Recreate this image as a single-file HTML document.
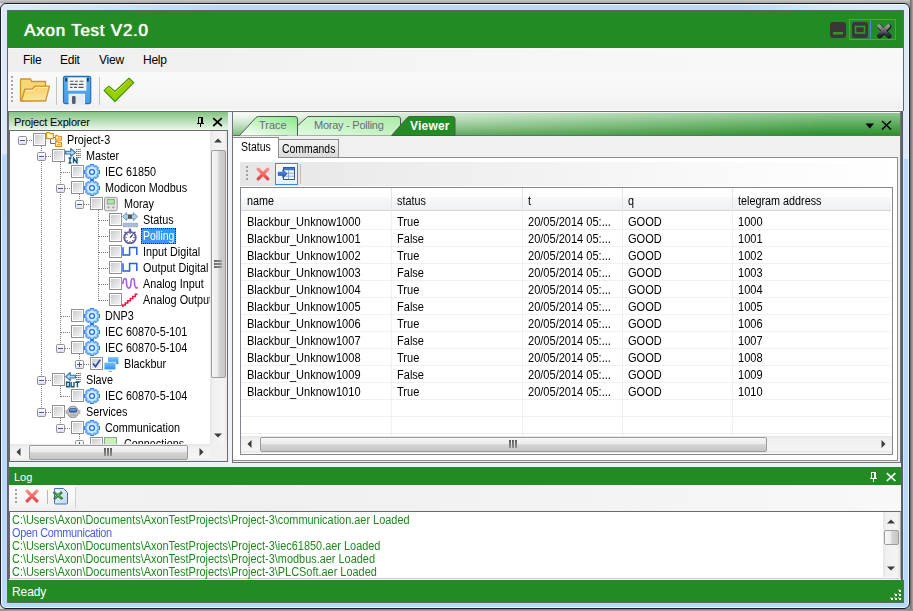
<!DOCTYPE html>
<html><head><meta charset="utf-8"><style>
html,body{margin:0;padding:0;}
body{width:913px;height:611px;position:relative;overflow:hidden;background:linear-gradient(90deg,#d8d8d8,#e4e4e4 50%,#d0d0d0 98%,#8a8a8a);font-family:'Liberation Sans',sans-serif;}
div{position:absolute;}
svg{position:absolute;}
</style></head><body>
<div style="left:0px;top:0px;width:913px;height:3px;background:linear-gradient(#c8c8c8,#a4a4a4);"></div>
<div style="left:910px;top:0px;width:3px;height:611px;background:linear-gradient(90deg,#6a6a6a,#8c8c8c 60%,#a8a8a8);"></div>
<div style="left:0px;top:609px;width:913px;height:2px;background:linear-gradient(#7c7c7c,#a8a8a8);"></div>
<div style="left:0px;top:3px;width:910px;height:606px;box-sizing:border-box;border:1px solid #1b1f2a;border-radius:6px;background:linear-gradient(90deg,#dde9f8 0,#d4e6f8 80px,#b9d9f8 220px,#b9d9f8 740px,#d6e7f8 820px,#dde9f8 100%) top/100% 7px no-repeat,linear-gradient(180.3deg,#dfeaf8 0,#dde9f8 154.5px,#b9d8f8 155.5px,#bad9f9);box-shadow:inset 0 0 0 1px #f2f8ff;"></div>
<div style="left:7px;top:10px;width:897px;height:593px;box-sizing:border-box;border:1px solid #5f6670;background:#eef3f9;"></div>
<div style="left:8px;top:11px;width:895px;height:37px;background:#238b23;"></div>
<div style="left:24px;top:21px;font:17px/20px 'Liberation Sans',sans-serif;color:#fff;letter-spacing:0.75px;text-shadow:0.5px 0 0 #fff,0 0 2px rgba(255,255,220,.4);">Axon Test V2.0</div>
<div style="left:8px;top:48px;width:895px;height:24px;background:linear-gradient(90deg,#efefef 0,#f0f0f0 160px,#f5f5f5 420px,#f7f7f7 600px,#f8f8f8);border-top:1px solid #fafafa;box-sizing:border-box;"></div>
<div style="left:23px;top:53px;font:12px/14px 'Liberation Sans',sans-serif;color:#000;letter-spacing:-0.25px;">File</div>
<div style="left:60px;top:53px;font:12px/14px 'Liberation Sans',sans-serif;color:#000;letter-spacing:-0.25px;">Edit</div>
<div style="left:99px;top:53px;font:12px/14px 'Liberation Sans',sans-serif;color:#000;letter-spacing:-0.25px;">View</div>
<div style="left:143px;top:53px;font:12px/14px 'Liberation Sans',sans-serif;color:#000;letter-spacing:-0.25px;">Help</div>
<div style="left:8px;top:72px;width:895px;height:40px;background:linear-gradient(#fafafa,#f5f5f5 70%,#f0f0f0 95%,#ffffff 97.5%);border-bottom:1px solid #6e6e6e;box-sizing:border-box;"></div>
<div style="left:8px;top:112px;width:220px;height:350px;background:#fff;"></div>
<div style="left:8px;top:112px;width:220px;height:18px;box-sizing:border-box;border-left:1px solid #6a6a6a;background:linear-gradient(#84c584,#ecf7ec);"></div>
<div style="left:14px;top:116px;font:11px/12px 'Liberation Sans',sans-serif;color:#000;letter-spacing:-0.15px;">Project Explorer</div>
<div style="left:8px;top:130px;width:220px;height:332px;box-sizing:border-box;border:1px solid #6a6a6a;border-left-width:2px;background:#fff;"></div>
<svg width="0" height="0" style="position:absolute"><defs>
<radialGradient id="gearg" cx="50%" cy="50%" r="50%"><stop offset="0" stop-color="#f4faff"/><stop offset="0.5" stop-color="#c4e2ff"/><stop offset="0.8" stop-color="#9ccdfa"/><stop offset="1" stop-color="#6ab0f4"/></radialGradient>
<linearGradient id="cbg" x1="0" y1="0" x2="1" y2="1"><stop offset="0" stop-color="#c9cbd0"/><stop offset="1" stop-color="#f6f6f6"/></linearGradient>
<linearGradient id="expg" x1="0" y1="0" x2="0" y2="1"><stop offset="0" stop-color="#ffffff"/><stop offset="0.5" stop-color="#f4f4f4"/><stop offset="1" stop-color="#dcdcdc"/></linearGradient>
</defs></svg>
<div style="left:10px;top:131px;width:200px;height:313px;overflow:hidden;"><div style="left:31px;top:15px;width:1px;height:267px;background:repeating-linear-gradient(180deg,#7a7a7a 0 1px,transparent 1px 2px);"></div>
<div style="left:50px;top:31px;width:1px;height:187px;background:repeating-linear-gradient(180deg,#7a7a7a 0 1px,transparent 1px 2px);"></div>
<div style="left:69px;top:63px;width:1px;height:11px;background:repeating-linear-gradient(180deg,#7a7a7a 0 1px,transparent 1px 2px);"></div>
<div style="left:88px;top:79px;width:1px;height:91px;background:repeating-linear-gradient(180deg,#7a7a7a 0 1px,transparent 1px 2px);"></div>
<div style="left:69px;top:223px;width:1px;height:11px;background:repeating-linear-gradient(180deg,#7a7a7a 0 1px,transparent 1px 2px);"></div>
<div style="left:50px;top:255px;width:1px;height:11px;background:repeating-linear-gradient(180deg,#7a7a7a 0 1px,transparent 1px 2px);"></div>
<div style="left:50px;top:287px;width:1px;height:11px;background:repeating-linear-gradient(180deg,#7a7a7a 0 1px,transparent 1px 2px);"></div>
<div style="left:69px;top:303px;width:1px;height:11px;background:repeating-linear-gradient(180deg,#7a7a7a 0 1px,transparent 1px 2px);"></div>
<svg style="left:8px;top:5px" width="9" height="9" viewBox="0 0 9 9"><rect x="0.5" y="0.5" width="8" height="8" rx="1" fill="url(#expg)" stroke="#919191"/><rect x="2" y="4" width="5" height="1" fill="#3b55b0"/></svg>
<div style="left:17px;top:9px;width:6px;height:1px;background:repeating-linear-gradient(90deg,#7a7a7a 0 1px,transparent 1px 2px);"></div>
<svg style="left:23px;top:2px" width="13" height="13" viewBox="0 0 13 13"><rect x="0.5" y="0.5" width="12" height="12" fill="#fff" stroke="#8e8f8f"/><rect x="2" y="2" width="9" height="9" fill="url(#cbg)"/></svg>
<svg style="left:36px;top:1px" width="16" height="16" viewBox="0 0 16 16"><path d="M4.5,6.5 V11.5 H9.5 M7.5,5.5 H9.5" stroke="#707070" fill="none"/><path d="M0.6,6.6 V0.6 H3.4 L4.4,1.6 H7.4 V6.6 Z" fill="#fffbd0" stroke="#d8961c" stroke-width="1.2"/><path d="M9.6,8.2 V3.6 H11.6 L12.6,4.6 H15.4 V8.2 Z" fill="#fffbd0" stroke="#d8961c" stroke-width="1.2"/><path d="M9.6,14.4 V9.6 H11.6 L12.6,10.6 H15.4 V14.4 Z" fill="#fffbd0" stroke="#d8961c" stroke-width="1.2"/><path d="M11,6.5 H14 M11,12.5 H14" stroke="#f0a030" stroke-width="0.9"/></svg>
<div style="left:57px;top:1px;font:12px/16px 'Liberation Sans',sans-serif;color:#000;white-space:nowrap;transform:scaleX(0.9);transform-origin:0 0;">Project-3</div>
<svg style="left:27px;top:21px" width="9" height="9" viewBox="0 0 9 9"><rect x="0.5" y="0.5" width="8" height="8" rx="1" fill="url(#expg)" stroke="#919191"/><rect x="2" y="4" width="5" height="1" fill="#3b55b0"/></svg>
<div style="left:36px;top:25px;width:6px;height:1px;background:repeating-linear-gradient(90deg,#7a7a7a 0 1px,transparent 1px 2px);"></div>
<svg style="left:42px;top:18px" width="13" height="13" viewBox="0 0 13 13"><rect x="0.5" y="0.5" width="12" height="12" fill="#fff" stroke="#8e8f8f"/><rect x="2" y="2" width="9" height="9" fill="url(#cbg)"/></svg>
<svg style="left:55px;top:17px" width="16" height="16" viewBox="0 0 16 16"><polygon points="0.6,3.2 5.8,3.2 5.8,0.6 10.4,4.6 5.8,8.4 5.8,6 0.6,6" fill="#b2daf6" stroke="#2b6ea6" stroke-width="1.1"/><path d="M11,1.5 H16 M11,3.5 H16 M11,5.5 H16 M11,7.5 H16 M11,9.5 H16" stroke="#555" stroke-width="0.9" stroke-dasharray="1.5 0.6"/><path d="M3.5,10 H6.5 M5,10 V15 M3.5,15 H6.5 M8.5,15.2 V10 L12,15 V9.8" fill="none" stroke="#17587a" stroke-width="1.4"/></svg>
<div style="left:76px;top:17px;font:12px/16px 'Liberation Sans',sans-serif;color:#000;white-space:nowrap;transform:scaleX(0.9);transform-origin:0 0;">Master</div>
<div style="left:51px;top:41px;width:10px;height:1px;background:repeating-linear-gradient(90deg,#7a7a7a 0 1px,transparent 1px 2px);"></div>
<svg style="left:61px;top:34px" width="13" height="13" viewBox="0 0 13 13"><rect x="0.5" y="0.5" width="12" height="12" fill="#fff" stroke="#8e8f8f"/><rect x="2" y="2" width="9" height="9" fill="url(#cbg)"/></svg>
<svg style="left:74px;top:33px" width="16" height="16" viewBox="0 0 16 16"><path d="M5.82,2.73 L6.04,2.65 L6.25,0.50 L9.75,0.50 L9.96,2.65 L10.18,2.73 L10.40,2.83 L12.06,1.46 L14.54,3.94 L13.17,5.60 L13.27,5.82 L13.35,6.04 L15.50,6.25 L15.50,9.75 L13.35,9.96 L13.27,10.18 L13.17,10.40 L14.54,12.06 L12.06,14.54 L10.40,13.17 L10.18,13.27 L9.96,13.35 L9.75,15.50 L6.25,15.50 L6.04,13.35 L5.82,13.27 L5.60,13.17 L3.94,14.54 L1.46,12.06 L2.83,10.40 L2.73,10.18 L2.65,9.96 L0.50,9.75 L0.50,6.25 L2.65,6.04 L2.73,5.82 L2.83,5.60 L1.46,3.94 L3.94,1.46 L5.60,2.83Z" fill="url(#gearg)" stroke="#1f7cf0" stroke-width="1"/><circle cx="8" cy="8" r="4.3" fill="none" stroke="#d8ecff" stroke-width="1.2"/><circle cx="8" cy="8" r="2.4" fill="#fff" stroke="#1c6ee0" stroke-width="1.3"/></svg>
<div style="left:95px;top:33px;font:12px/16px 'Liberation Sans',sans-serif;color:#000;white-space:nowrap;transform:scaleX(0.9);transform-origin:0 0;">IEC 61850</div>
<svg style="left:46px;top:53px" width="9" height="9" viewBox="0 0 9 9"><rect x="0.5" y="0.5" width="8" height="8" rx="1" fill="url(#expg)" stroke="#919191"/><rect x="2" y="4" width="5" height="1" fill="#3b55b0"/></svg>
<div style="left:55px;top:57px;width:6px;height:1px;background:repeating-linear-gradient(90deg,#7a7a7a 0 1px,transparent 1px 2px);"></div>
<svg style="left:61px;top:50px" width="13" height="13" viewBox="0 0 13 13"><rect x="0.5" y="0.5" width="12" height="12" fill="#fff" stroke="#8e8f8f"/><rect x="2" y="2" width="9" height="9" fill="url(#cbg)"/></svg>
<svg style="left:74px;top:49px" width="16" height="16" viewBox="0 0 16 16"><path d="M5.82,2.73 L6.04,2.65 L6.25,0.50 L9.75,0.50 L9.96,2.65 L10.18,2.73 L10.40,2.83 L12.06,1.46 L14.54,3.94 L13.17,5.60 L13.27,5.82 L13.35,6.04 L15.50,6.25 L15.50,9.75 L13.35,9.96 L13.27,10.18 L13.17,10.40 L14.54,12.06 L12.06,14.54 L10.40,13.17 L10.18,13.27 L9.96,13.35 L9.75,15.50 L6.25,15.50 L6.04,13.35 L5.82,13.27 L5.60,13.17 L3.94,14.54 L1.46,12.06 L2.83,10.40 L2.73,10.18 L2.65,9.96 L0.50,9.75 L0.50,6.25 L2.65,6.04 L2.73,5.82 L2.83,5.60 L1.46,3.94 L3.94,1.46 L5.60,2.83Z" fill="url(#gearg)" stroke="#1f7cf0" stroke-width="1"/><circle cx="8" cy="8" r="4.3" fill="none" stroke="#d8ecff" stroke-width="1.2"/><circle cx="8" cy="8" r="2.4" fill="#fff" stroke="#1c6ee0" stroke-width="1.3"/></svg>
<div style="left:95px;top:49px;font:12px/16px 'Liberation Sans',sans-serif;color:#000;white-space:nowrap;transform:scaleX(0.9);transform-origin:0 0;">Modicon Modbus</div>
<svg style="left:65px;top:69px" width="9" height="9" viewBox="0 0 9 9"><rect x="0.5" y="0.5" width="8" height="8" rx="1" fill="url(#expg)" stroke="#919191"/><rect x="2" y="4" width="5" height="1" fill="#3b55b0"/></svg>
<div style="left:74px;top:73px;width:6px;height:1px;background:repeating-linear-gradient(90deg,#7a7a7a 0 1px,transparent 1px 2px);"></div>
<svg style="left:80px;top:66px" width="13" height="13" viewBox="0 0 13 13"><rect x="0.5" y="0.5" width="12" height="12" fill="#fff" stroke="#8e8f8f"/><rect x="2" y="2" width="9" height="9" fill="url(#cbg)"/></svg>
<svg style="left:93px;top:65px" width="16" height="16" viewBox="0 0 16 16"><rect x="1.5" y="1.3" width="12.7" height="13.5" rx="1.5" fill="#e4e4e4" stroke="#9a9a9a"/><rect x="4.3" y="3.3" width="7" height="4.7" fill="#a8ec9c" stroke="#8a8a8a" stroke-width="0.8"/><circle cx="5.5" cy="11.3" r="1.1" fill="#9a9a9a"/><circle cx="10.3" cy="11.3" r="1.1" fill="#9a9a9a"/></svg>
<div style="left:114px;top:65px;font:12px/16px 'Liberation Sans',sans-serif;color:#000;white-space:nowrap;transform:scaleX(0.9);transform-origin:0 0;">Moray</div>
<div style="left:89px;top:89px;width:10px;height:1px;background:repeating-linear-gradient(90deg,#7a7a7a 0 1px,transparent 1px 2px);"></div>
<svg style="left:99px;top:82px" width="13" height="13" viewBox="0 0 13 13"><rect x="0.5" y="0.5" width="12" height="12" fill="#fff" stroke="#8e8f8f"/><rect x="2" y="2" width="9" height="9" fill="url(#cbg)"/></svg>
<svg style="left:112px;top:81px" width="16" height="16" viewBox="0 0 16 16"><polygon points="0.6,4.6 4.6,0.6 4.6,2.8 11.4,2.8 11.4,0.6 15.4,4.6 11.4,8.8 11.4,6.6 4.6,6.6 4.6,8.8" fill="#a9cdf0" stroke="#6d8fb8" stroke-width="0.9"/><rect x="6" y="2.8" width="4" height="3.8" fill="#555"/><rect x="1" y="11" width="15" height="4" fill="#a9bdd8" stroke="#8aa0c0" stroke-width="0.6" stroke-dasharray="1.5 1"/></svg>
<div style="left:133px;top:81px;font:12px/16px 'Liberation Sans',sans-serif;color:#000;white-space:nowrap;transform:scaleX(0.9);transform-origin:0 0;">Status</div>
<div style="left:89px;top:105px;width:10px;height:1px;background:repeating-linear-gradient(90deg,#7a7a7a 0 1px,transparent 1px 2px);"></div>
<svg style="left:99px;top:98px" width="13" height="13" viewBox="0 0 13 13"><rect x="0.5" y="0.5" width="12" height="12" fill="#fff" stroke="#8e8f8f"/><rect x="2" y="2" width="9" height="9" fill="url(#cbg)"/></svg>
<svg style="left:112px;top:97px" width="16" height="16" viewBox="0 0 16 16"><circle cx="8" cy="9.6" r="5.8" fill="#fff" stroke="#5b5ba8" stroke-width="1.8"/><rect x="6.8" y="0.6" width="2.4" height="2.6" fill="#5b5ba8"/><path d="M2.5,3.8 L4,5 M13.5,3.8 L12,5" stroke="#5b5ba8" stroke-width="1.6"/><path d="M8,9.6 L10.8,6.6" stroke="#222" stroke-width="1.1"/><g fill="#222"><circle cx="8" cy="5.6" r="0.6"/><circle cx="8" cy="13.6" r="0.6"/><circle cx="4" cy="9.6" r="0.6"/><circle cx="12" cy="9.6" r="0.6"/><circle cx="5.2" cy="6.8" r="0.5"/><circle cx="5.2" cy="12.4" r="0.5"/><circle cx="10.8" cy="12.4" r="0.5"/></g></svg>
<div style="left:131px;top:97px;width:35px;height:16px;box-sizing:border-box;background:#3399ff;border:1px dotted #3a2a10;"></div>
<div style="left:133px;top:97px;font:12px/16px 'Liberation Sans',sans-serif;color:#fff;white-space:nowrap;transform:scaleX(0.87);transform-origin:0 0;">Polling</div>
<div style="left:89px;top:121px;width:10px;height:1px;background:repeating-linear-gradient(90deg,#7a7a7a 0 1px,transparent 1px 2px);"></div>
<svg style="left:99px;top:114px" width="13" height="13" viewBox="0 0 13 13"><rect x="0.5" y="0.5" width="12" height="12" fill="#fff" stroke="#8e8f8f"/><rect x="2" y="2" width="9" height="9" fill="url(#cbg)"/></svg>
<svg style="left:112px;top:113px" width="16" height="16" viewBox="0 0 16 16"><path d="M1,3.2 V11 H7.6 V3.5 H14.8 V11" fill="none" stroke="#2060e8" stroke-width="1.5"/></svg>
<div style="left:133px;top:113px;font:12px/16px 'Liberation Sans',sans-serif;color:#000;white-space:nowrap;transform:scaleX(0.9);transform-origin:0 0;">Input Digital</div>
<div style="left:89px;top:137px;width:10px;height:1px;background:repeating-linear-gradient(90deg,#7a7a7a 0 1px,transparent 1px 2px);"></div>
<svg style="left:99px;top:130px" width="13" height="13" viewBox="0 0 13 13"><rect x="0.5" y="0.5" width="12" height="12" fill="#fff" stroke="#8e8f8f"/><rect x="2" y="2" width="9" height="9" fill="url(#cbg)"/></svg>
<svg style="left:112px;top:129px" width="16" height="16" viewBox="0 0 16 16"><path d="M1,3.2 V11 H7.6 V3.5 H14.8 V11" fill="none" stroke="#2060e8" stroke-width="1.5"/></svg>
<div style="left:133px;top:129px;font:12px/16px 'Liberation Sans',sans-serif;color:#000;white-space:nowrap;transform:scaleX(0.9);transform-origin:0 0;">Output Digital</div>
<div style="left:89px;top:153px;width:10px;height:1px;background:repeating-linear-gradient(90deg,#7a7a7a 0 1px,transparent 1px 2px);"></div>
<svg style="left:99px;top:146px" width="13" height="13" viewBox="0 0 13 13"><rect x="0.5" y="0.5" width="12" height="12" fill="#fff" stroke="#8e8f8f"/><rect x="2" y="2" width="9" height="9" fill="url(#cbg)"/></svg>
<svg style="left:112px;top:145px" width="16" height="16" viewBox="0 0 16 16"><path d="M1,8 C1,1 4.5,1 4.5,6 C4.5,14 9,14 9,7 C9,1 12.5,1 12.5,7 C12.5,12 15,13 15.5,11" fill="none" stroke="#a45ae8" stroke-width="1.6"/></svg>
<div style="left:133px;top:145px;font:12px/16px 'Liberation Sans',sans-serif;color:#000;white-space:nowrap;transform:scaleX(0.9);transform-origin:0 0;">Analog Input</div>
<div style="left:89px;top:169px;width:10px;height:1px;background:repeating-linear-gradient(90deg,#7a7a7a 0 1px,transparent 1px 2px);"></div>
<svg style="left:99px;top:162px" width="13" height="13" viewBox="0 0 13 13"><rect x="0.5" y="0.5" width="12" height="12" fill="#fff" stroke="#8e8f8f"/><rect x="2" y="2" width="9" height="9" fill="url(#cbg)"/></svg>
<svg style="left:112px;top:161px" width="16" height="16" viewBox="0 0 16 16"><path d="M0.8,15 V13 H3.3 V11 H5.8 V8.8 H8.3 V6.6 H10.8 V4.4 H13.3 V2.2 H15.5" fill="none" stroke="#e8163c" stroke-width="1.5"/></svg>
<div style="left:133px;top:161px;font:12px/16px 'Liberation Sans',sans-serif;color:#000;white-space:nowrap;transform:scaleX(0.9);transform-origin:0 0;">Analog Output</div>
<div style="left:51px;top:185px;width:10px;height:1px;background:repeating-linear-gradient(90deg,#7a7a7a 0 1px,transparent 1px 2px);"></div>
<svg style="left:61px;top:178px" width="13" height="13" viewBox="0 0 13 13"><rect x="0.5" y="0.5" width="12" height="12" fill="#fff" stroke="#8e8f8f"/><rect x="2" y="2" width="9" height="9" fill="url(#cbg)"/></svg>
<svg style="left:74px;top:177px" width="16" height="16" viewBox="0 0 16 16"><path d="M5.82,2.73 L6.04,2.65 L6.25,0.50 L9.75,0.50 L9.96,2.65 L10.18,2.73 L10.40,2.83 L12.06,1.46 L14.54,3.94 L13.17,5.60 L13.27,5.82 L13.35,6.04 L15.50,6.25 L15.50,9.75 L13.35,9.96 L13.27,10.18 L13.17,10.40 L14.54,12.06 L12.06,14.54 L10.40,13.17 L10.18,13.27 L9.96,13.35 L9.75,15.50 L6.25,15.50 L6.04,13.35 L5.82,13.27 L5.60,13.17 L3.94,14.54 L1.46,12.06 L2.83,10.40 L2.73,10.18 L2.65,9.96 L0.50,9.75 L0.50,6.25 L2.65,6.04 L2.73,5.82 L2.83,5.60 L1.46,3.94 L3.94,1.46 L5.60,2.83Z" fill="url(#gearg)" stroke="#1f7cf0" stroke-width="1"/><circle cx="8" cy="8" r="4.3" fill="none" stroke="#d8ecff" stroke-width="1.2"/><circle cx="8" cy="8" r="2.4" fill="#fff" stroke="#1c6ee0" stroke-width="1.3"/></svg>
<div style="left:95px;top:177px;font:12px/16px 'Liberation Sans',sans-serif;color:#000;white-space:nowrap;transform:scaleX(0.9);transform-origin:0 0;">DNP3</div>
<div style="left:51px;top:201px;width:10px;height:1px;background:repeating-linear-gradient(90deg,#7a7a7a 0 1px,transparent 1px 2px);"></div>
<svg style="left:61px;top:194px" width="13" height="13" viewBox="0 0 13 13"><rect x="0.5" y="0.5" width="12" height="12" fill="#fff" stroke="#8e8f8f"/><rect x="2" y="2" width="9" height="9" fill="url(#cbg)"/></svg>
<svg style="left:74px;top:193px" width="16" height="16" viewBox="0 0 16 16"><path d="M5.82,2.73 L6.04,2.65 L6.25,0.50 L9.75,0.50 L9.96,2.65 L10.18,2.73 L10.40,2.83 L12.06,1.46 L14.54,3.94 L13.17,5.60 L13.27,5.82 L13.35,6.04 L15.50,6.25 L15.50,9.75 L13.35,9.96 L13.27,10.18 L13.17,10.40 L14.54,12.06 L12.06,14.54 L10.40,13.17 L10.18,13.27 L9.96,13.35 L9.75,15.50 L6.25,15.50 L6.04,13.35 L5.82,13.27 L5.60,13.17 L3.94,14.54 L1.46,12.06 L2.83,10.40 L2.73,10.18 L2.65,9.96 L0.50,9.75 L0.50,6.25 L2.65,6.04 L2.73,5.82 L2.83,5.60 L1.46,3.94 L3.94,1.46 L5.60,2.83Z" fill="url(#gearg)" stroke="#1f7cf0" stroke-width="1"/><circle cx="8" cy="8" r="4.3" fill="none" stroke="#d8ecff" stroke-width="1.2"/><circle cx="8" cy="8" r="2.4" fill="#fff" stroke="#1c6ee0" stroke-width="1.3"/></svg>
<div style="left:95px;top:193px;font:12px/16px 'Liberation Sans',sans-serif;color:#000;white-space:nowrap;transform:scaleX(0.9);transform-origin:0 0;">IEC 60870-5-101</div>
<svg style="left:46px;top:213px" width="9" height="9" viewBox="0 0 9 9"><rect x="0.5" y="0.5" width="8" height="8" rx="1" fill="url(#expg)" stroke="#919191"/><rect x="2" y="4" width="5" height="1" fill="#3b55b0"/></svg>
<div style="left:55px;top:217px;width:6px;height:1px;background:repeating-linear-gradient(90deg,#7a7a7a 0 1px,transparent 1px 2px);"></div>
<svg style="left:61px;top:210px" width="13" height="13" viewBox="0 0 13 13"><rect x="0.5" y="0.5" width="12" height="12" fill="#fff" stroke="#8e8f8f"/><rect x="2" y="2" width="9" height="9" fill="url(#cbg)"/></svg>
<svg style="left:74px;top:209px" width="16" height="16" viewBox="0 0 16 16"><path d="M5.82,2.73 L6.04,2.65 L6.25,0.50 L9.75,0.50 L9.96,2.65 L10.18,2.73 L10.40,2.83 L12.06,1.46 L14.54,3.94 L13.17,5.60 L13.27,5.82 L13.35,6.04 L15.50,6.25 L15.50,9.75 L13.35,9.96 L13.27,10.18 L13.17,10.40 L14.54,12.06 L12.06,14.54 L10.40,13.17 L10.18,13.27 L9.96,13.35 L9.75,15.50 L6.25,15.50 L6.04,13.35 L5.82,13.27 L5.60,13.17 L3.94,14.54 L1.46,12.06 L2.83,10.40 L2.73,10.18 L2.65,9.96 L0.50,9.75 L0.50,6.25 L2.65,6.04 L2.73,5.82 L2.83,5.60 L1.46,3.94 L3.94,1.46 L5.60,2.83Z" fill="url(#gearg)" stroke="#1f7cf0" stroke-width="1"/><circle cx="8" cy="8" r="4.3" fill="none" stroke="#d8ecff" stroke-width="1.2"/><circle cx="8" cy="8" r="2.4" fill="#fff" stroke="#1c6ee0" stroke-width="1.3"/></svg>
<div style="left:95px;top:209px;font:12px/16px 'Liberation Sans',sans-serif;color:#000;white-space:nowrap;transform:scaleX(0.9);transform-origin:0 0;">IEC 60870-5-104</div>
<svg style="left:65px;top:229px" width="9" height="9" viewBox="0 0 9 9"><rect x="0.5" y="0.5" width="8" height="8" rx="1" fill="url(#expg)" stroke="#919191"/><rect x="2" y="4" width="5" height="1" fill="#3b55b0"/><rect x="4" y="2" width="1" height="5" fill="#3b55b0"/></svg>
<div style="left:74px;top:233px;width:6px;height:1px;background:repeating-linear-gradient(90deg,#7a7a7a 0 1px,transparent 1px 2px);"></div>
<svg style="left:80px;top:226px" width="13" height="13" viewBox="0 0 13 13"><rect x="0.5" y="0.5" width="12" height="12" fill="#fff" stroke="#8e8f8f"/><rect x="2" y="2" width="9" height="9" fill="url(#cbg)"/><path d="M3,6.5 L5.5,9.5 L10.2,2.8" fill="none" stroke="#3d4fa8" stroke-width="1.8"/></svg>
<svg style="left:93px;top:225px" width="16" height="16" viewBox="0 0 16 16"><defs><linearGradient id="ng" x1="0" y1="0" x2="0" y2="1"><stop offset="0" stop-color="#78c4fb"/><stop offset="1" stop-color="#2a8ef0"/></linearGradient></defs><rect x="5" y="1.1" width="10.4" height="7.1" fill="url(#ng)"/><rect x="1.1" y="6.2" width="11.7" height="7.6" fill="url(#ng)" stroke="#f4f0ec" stroke-width="0.7"/><rect x="5.5" y="14.8" width="3.6" height="1" fill="#9aa0a8"/></svg>
<div style="left:114px;top:225px;font:12px/16px 'Liberation Sans',sans-serif;color:#000;white-space:nowrap;transform:scaleX(0.9);transform-origin:0 0;">Blackbur</div>
<svg style="left:27px;top:245px" width="9" height="9" viewBox="0 0 9 9"><rect x="0.5" y="0.5" width="8" height="8" rx="1" fill="url(#expg)" stroke="#919191"/><rect x="2" y="4" width="5" height="1" fill="#3b55b0"/></svg>
<div style="left:36px;top:249px;width:6px;height:1px;background:repeating-linear-gradient(90deg,#7a7a7a 0 1px,transparent 1px 2px);"></div>
<svg style="left:42px;top:242px" width="13" height="13" viewBox="0 0 13 13"><rect x="0.5" y="0.5" width="12" height="12" fill="#fff" stroke="#8e8f8f"/><rect x="2" y="2" width="9" height="9" fill="url(#cbg)"/></svg>
<svg style="left:55px;top:241px" width="16" height="16" viewBox="0 0 16 16"><polygon points="10.4,3.2 5.2,3.2 5.2,0.6 0.6,4.6 5.2,8.4 5.2,6 10.4,6" fill="#b2daf6" stroke="#2b6ea6" stroke-width="1.1"/><path d="M11,1.5 H16 M11,3.5 H16 M11,5.5 H16 M11,7.5 H16 M11,9.5 H16" stroke="#555" stroke-width="0.9" stroke-dasharray="1.5 0.6"/><path d="M1.6,10.2 H4.4 V14.8 H1.6 Z M6.2,10 V14.8 H9 V10 M10.2,10.2 H14.6 M12.4,10.2 V15.2" fill="none" stroke="#17587a" stroke-width="1.4"/></svg>
<div style="left:76px;top:241px;font:12px/16px 'Liberation Sans',sans-serif;color:#000;white-space:nowrap;transform:scaleX(0.9);transform-origin:0 0;">Slave</div>
<div style="left:51px;top:265px;width:10px;height:1px;background:repeating-linear-gradient(90deg,#7a7a7a 0 1px,transparent 1px 2px);"></div>
<svg style="left:61px;top:258px" width="13" height="13" viewBox="0 0 13 13"><rect x="0.5" y="0.5" width="12" height="12" fill="#fff" stroke="#8e8f8f"/><rect x="2" y="2" width="9" height="9" fill="url(#cbg)"/></svg>
<svg style="left:74px;top:257px" width="16" height="16" viewBox="0 0 16 16"><path d="M5.82,2.73 L6.04,2.65 L6.25,0.50 L9.75,0.50 L9.96,2.65 L10.18,2.73 L10.40,2.83 L12.06,1.46 L14.54,3.94 L13.17,5.60 L13.27,5.82 L13.35,6.04 L15.50,6.25 L15.50,9.75 L13.35,9.96 L13.27,10.18 L13.17,10.40 L14.54,12.06 L12.06,14.54 L10.40,13.17 L10.18,13.27 L9.96,13.35 L9.75,15.50 L6.25,15.50 L6.04,13.35 L5.82,13.27 L5.60,13.17 L3.94,14.54 L1.46,12.06 L2.83,10.40 L2.73,10.18 L2.65,9.96 L0.50,9.75 L0.50,6.25 L2.65,6.04 L2.73,5.82 L2.83,5.60 L1.46,3.94 L3.94,1.46 L5.60,2.83Z" fill="url(#gearg)" stroke="#1f7cf0" stroke-width="1"/><circle cx="8" cy="8" r="4.3" fill="none" stroke="#d8ecff" stroke-width="1.2"/><circle cx="8" cy="8" r="2.4" fill="#fff" stroke="#1c6ee0" stroke-width="1.3"/></svg>
<div style="left:95px;top:257px;font:12px/16px 'Liberation Sans',sans-serif;color:#000;white-space:nowrap;transform:scaleX(0.9);transform-origin:0 0;">IEC 60870-5-104</div>
<svg style="left:27px;top:277px" width="9" height="9" viewBox="0 0 9 9"><rect x="0.5" y="0.5" width="8" height="8" rx="1" fill="url(#expg)" stroke="#919191"/><rect x="2" y="4" width="5" height="1" fill="#3b55b0"/></svg>
<div style="left:36px;top:281px;width:6px;height:1px;background:repeating-linear-gradient(90deg,#7a7a7a 0 1px,transparent 1px 2px);"></div>
<svg style="left:42px;top:274px" width="13" height="13" viewBox="0 0 13 13"><rect x="0.5" y="0.5" width="12" height="12" fill="#fff" stroke="#8e8f8f"/><rect x="2" y="2" width="9" height="9" fill="url(#cbg)"/></svg>
<svg style="left:55px;top:273px" width="16" height="16" viewBox="0 0 16 16"><rect x="2.6" y="2.2" width="10.6" height="11.4" rx="5" fill="#c8c8c8" stroke="#8c8c8c"/><rect x="0.6" y="6" width="2.2" height="4" fill="#b8b8b8"/><rect x="13.2" y="6" width="2.2" height="4" fill="#b8b8b8"/><rect x="4.4" y="4.6" width="7.2" height="3.6" rx="1.2" fill="#3a62b8" stroke="#1f3f88" stroke-width="0.6"/><rect x="5.2" y="5.3" width="5.6" height="1.2" fill="#8fb0ec"/><path d="M5,11 H11" stroke="#9c9c9c"/></svg>
<div style="left:76px;top:273px;font:12px/16px 'Liberation Sans',sans-serif;color:#000;white-space:nowrap;transform:scaleX(0.9);transform-origin:0 0;">Services</div>
<svg style="left:46px;top:293px" width="9" height="9" viewBox="0 0 9 9"><rect x="0.5" y="0.5" width="8" height="8" rx="1" fill="url(#expg)" stroke="#919191"/><rect x="2" y="4" width="5" height="1" fill="#3b55b0"/></svg>
<div style="left:55px;top:297px;width:6px;height:1px;background:repeating-linear-gradient(90deg,#7a7a7a 0 1px,transparent 1px 2px);"></div>
<svg style="left:61px;top:290px" width="13" height="13" viewBox="0 0 13 13"><rect x="0.5" y="0.5" width="12" height="12" fill="#fff" stroke="#8e8f8f"/><rect x="2" y="2" width="9" height="9" fill="url(#cbg)"/></svg>
<svg style="left:74px;top:289px" width="16" height="16" viewBox="0 0 16 16"><path d="M5.82,2.73 L6.04,2.65 L6.25,0.50 L9.75,0.50 L9.96,2.65 L10.18,2.73 L10.40,2.83 L12.06,1.46 L14.54,3.94 L13.17,5.60 L13.27,5.82 L13.35,6.04 L15.50,6.25 L15.50,9.75 L13.35,9.96 L13.27,10.18 L13.17,10.40 L14.54,12.06 L12.06,14.54 L10.40,13.17 L10.18,13.27 L9.96,13.35 L9.75,15.50 L6.25,15.50 L6.04,13.35 L5.82,13.27 L5.60,13.17 L3.94,14.54 L1.46,12.06 L2.83,10.40 L2.73,10.18 L2.65,9.96 L0.50,9.75 L0.50,6.25 L2.65,6.04 L2.73,5.82 L2.83,5.60 L1.46,3.94 L3.94,1.46 L5.60,2.83Z" fill="url(#gearg)" stroke="#1f7cf0" stroke-width="1"/><circle cx="8" cy="8" r="4.3" fill="none" stroke="#d8ecff" stroke-width="1.2"/><circle cx="8" cy="8" r="2.4" fill="#fff" stroke="#1c6ee0" stroke-width="1.3"/></svg>
<div style="left:95px;top:289px;font:12px/16px 'Liberation Sans',sans-serif;color:#000;white-space:nowrap;transform:scaleX(0.9);transform-origin:0 0;">Communication</div>
<svg style="left:65px;top:309px" width="9" height="9" viewBox="0 0 9 9"><rect x="0.5" y="0.5" width="8" height="8" rx="1" fill="url(#expg)" stroke="#919191"/><rect x="2" y="4" width="5" height="1" fill="#3b55b0"/><rect x="4" y="2" width="1" height="5" fill="#3b55b0"/></svg>
<div style="left:74px;top:313px;width:6px;height:1px;background:repeating-linear-gradient(90deg,#7a7a7a 0 1px,transparent 1px 2px);"></div>
<svg style="left:80px;top:306px" width="13" height="13" viewBox="0 0 13 13"><rect x="0.5" y="0.5" width="12" height="12" fill="#fff" stroke="#8e8f8f"/><rect x="2" y="2" width="9" height="9" fill="url(#cbg)"/></svg>
<svg style="left:93px;top:305px" width="16" height="16" viewBox="0 0 16 16"><rect x="1.5" y="1.5" width="12" height="12" fill="#c6f2b8" stroke="#8aa88a"/></svg>
<div style="left:114px;top:305px;font:12px/16px 'Liberation Sans',sans-serif;color:#000;white-space:nowrap;transform:scaleX(0.9);transform-origin:0 0;">Connections</div></div>
<div style="left:210px;top:131px;width:17px;height:313px;background:linear-gradient(90deg,#e6e6e6,#f0f0f0 20%,#f4f4f4 80%,#e8e8e8);"></div>
<svg style="left:214px;top:138px;" width="8" height="5" viewBox="0 0 8 5"><polygon points="0,4.5 4,0.5 8,4.5" fill="#3c3c3c"/></svg>
<svg style="left:214px;top:433px;" width="8" height="5" viewBox="0 0 8 5"><polygon points="0,0.5 4,4.5 8,0.5" fill="#3c3c3c"/></svg>
<div style="left:211px;top:150px;width:15px;height:228px;box-sizing:border-box;border:1px solid #9c9c9c;border-radius:2px;background:linear-gradient(90deg,#f6f6f6,#ebebeb 45%,#d4d4d4 52%,#c6c6c6);"></div>
<svg style="left:214px;top:260px;" width="9" height="8" viewBox="0 0 9 8"><defs><linearGradient id="gv" x1="0" y1="0" x2="1" y2="0"><stop offset="0" stop-color="#333"/><stop offset="1" stop-color="#888"/></linearGradient></defs><path d="M0,1 H8 M0,4 H8 M0,7 H8" stroke="url(#gv)" stroke-width="1.6"/></svg>
<div style="left:10px;top:444px;width:200px;height:17px;background:linear-gradient(#e6e6e6,#f0f0f0 20%,#f4f4f4 80%,#e8e8e8);"></div>
<svg style="left:16px;top:448px;" width="5" height="8" viewBox="0 0 5 8"><polygon points="4.5,0 0.5,4 4.5,8" fill="#3c3c3c"/></svg>
<svg style="left:199px;top:448px;" width="5" height="8" viewBox="0 0 5 8"><polygon points="0.5,0 4.5,4 0.5,8" fill="#3c3c3c"/></svg>
<div style="left:29px;top:445px;width:159px;height:15px;box-sizing:border-box;border:1px solid #9c9c9c;border-radius:2px;background:linear-gradient(#f6f6f6,#ebebeb 45%,#d4d4d4 52%,#c6c6c6);"></div>
<svg style="left:104px;top:448px;" width="8" height="9" viewBox="0 0 8 9"><defs><linearGradient id="gh" x1="0" y1="0" x2="0" y2="1"><stop offset="0" stop-color="#333"/><stop offset="1" stop-color="#888"/></linearGradient></defs><path d="M1,0 V8 M4,0 V8 M7,0 V8" stroke="url(#gh)" stroke-width="1.6"/></svg>
<div style="left:210px;top:444px;width:17px;height:17px;background:#f0f0f0;"></div>
<svg style="left:830px;top:22px;" width="16" height="16" viewBox="0 0 16 16"><rect x="0" y="0" width="16" height="16" rx="3" fill="#3a3737"/><rect x="3" y="10" width="10" height="2.5" fill="#2c9a2c"/></svg>
<svg style="left:852px;top:22px;" width="16" height="16" viewBox="0 0 16 16"><rect x="0" y="0" width="16" height="16" rx="3" fill="#3a3737"/><rect x="3.5" y="4.5" width="9" height="6.5" fill="none" stroke="#2c9a2c" stroke-width="1.6"/></svg>
<div style="left:849px;top:19px;width:47px;height:21px;box-sizing:border-box;border:1px solid #4f8ad0;"></div>
<div style="left:870px;top:19px;width:1px;height:21px;background:#4f8ad0;"></div>
<svg style="left:875px;top:22px;" width="18" height="17" viewBox="0 0 18 17"><defs><linearGradient id="xg" x1="0" y1="0" x2="0" y2="1"><stop offset="0" stop-color="#9a9a9a"/><stop offset="1" stop-color="#2a2a2a"/></linearGradient></defs><path d="M4,4 L13.5,13.5 M13.5,4 L4,13.5" stroke="#151515" stroke-width="4.6" stroke-linecap="round" transform="translate(0.6,0.6)"/><path d="M4,4 L13.5,13.5 M13.5,4 L4,13.5" stroke="url(#xg)" stroke-width="3.6" stroke-linecap="round"/></svg>
<div style="left:11px;top:76px;width:2px;height:26px;background:repeating-linear-gradient(180deg,#a8a8a8 0 2px,transparent 2px 4px);"></div>
<svg style="left:17px;top:74px;" width="38" height="32" viewBox="0 0 38 32"><defs><linearGradient id="fg" x1="0" y1="0" x2="0" y2="1"><stop offset="0" stop-color="#f6cf6a"/><stop offset="1" stop-color="#fde79c"/></linearGradient></defs><path d="M3.5,27 V5.5 Q3.5,5 4,5 H13.5 L14.5,7.5 H28.5 V26.5 Z" fill="#f7d676" stroke="#d4922c" stroke-width="1.3"/><path d="M4.5,26.8 L7.8,15.2 H15.2 L17.8,12.2 H32.5 L28.6,26.8 Z" fill="url(#fg)" stroke="#d4922c" stroke-width="1.3" stroke-linejoin="round"/><path d="M8.8,16.6 H15.8 L18.4,13.6 H30.8" stroke="#fff6d0" stroke-width="1" fill="none"/></svg>
<div style="left:56px;top:77px;width:1px;height:28px;background:#c4c4c4;"></div>
<svg style="left:60px;top:74px;" width="34" height="32" viewBox="0 0 34 32"><defs><linearGradient id="sg" x1="0" y1="0" x2="0" y2="1"><stop offset="0" stop-color="#5aaef0"/><stop offset="1" stop-color="#4a9ce4"/></linearGradient></defs><rect x="3.5" y="2.4" width="27.2" height="27.2" rx="1.8" fill="url(#sg)" stroke="#2170b8" stroke-width="1.2"/><rect x="8" y="3.7" width="18.2" height="13" fill="#f4f8fb" stroke="#bcd4ea" stroke-width="0.6"/><path d="M10,7.3 H13.5 M15,7.3 H18 M19.5,7.3 H23.5 M10,10.4 H17.5 M19,10.4 H23.5 M10,13.4 H12.5 M14,13.4 H17 M18.5,13.4 H23.5" stroke="#555" stroke-width="1.1"/><rect x="5.3" y="4" width="1.8" height="3.5" fill="#1a3350"/><rect x="27" y="4" width="1.8" height="3.5" fill="#1a3350"/><rect x="9" y="20.2" width="15.6" height="10" fill="#e6ecf4" stroke="#fff" stroke-width="0.8"/><rect x="12" y="22" width="3.6" height="8" rx="1.2" fill="#56606a"/></svg>
<div style="left:99px;top:77px;width:1px;height:28px;background:#c4c4c4;"></div>
<svg style="left:100px;top:74px;" width="38" height="32" viewBox="0 0 38 32"><defs><linearGradient id="cg" x1="0" y1="0" x2="0" y2="1"><stop offset="0" stop-color="#a8c000"/><stop offset="1" stop-color="#8cd800"/></linearGradient></defs><polygon points="8.9,12.3 14.9,17.5 29.1,4.2 33.8,8.6 14.9,27.5 4.2,16.5" fill="url(#cg)" stroke="#3d9800" stroke-width="1.2" stroke-linejoin="round"/><polyline points="5.6,16.4 8.9,13.4 14.9,18.8 29.1,5.6" fill="none" stroke="#d8ec60" stroke-width="0.8"/></svg>
<svg style="left:196px;top:116px;" width="10" height="12" viewBox="0 0 10 12"><rect x="2" y="1" width="1" height="6" fill="#000"/><rect x="2" y="1" width="5" height="1" fill="#000"/><rect x="5" y="1" width="2" height="6" fill="#000"/><rect x="1" y="7" width="7" height="1" fill="#000"/><rect x="4" y="8" width="1" height="3" fill="#000"/></svg>
<svg style="left:212px;top:117px;" width="11" height="10" viewBox="0 0 11 10"><path d="M1.2,1.2 L9.8,9 M9.8,1.2 L1.2,9" stroke="#000" stroke-width="1.7"/></svg>
<div style="left:232px;top:111px;width:669px;height:352px;box-sizing:border-box;border:1px solid #727272;background:#f0f0f0;"></div>
<div style="left:233px;top:112px;width:667px;height:24px;box-sizing:border-box;border-top:1px solid #f4f4f4;border-bottom:1px solid #6a6a6a;background:linear-gradient(#8fc88f,#2b8f2b);"></div>
<div style="left:233px;top:113px;width:667px;height:22px;background:linear-gradient(rgba(255,255,255,.95),rgba(255,255,255,.4));-webkit-mask-image:linear-gradient(90deg,#000 0,rgba(0,0,0,0) 600px);mask-image:linear-gradient(90deg,#000 0,rgba(0,0,0,0) 600px);"></div>
<svg style="left:233px;top:113px;" width="240" height="23" viewBox="0 0 240 23"><defs><linearGradient id="tg" x1="0" y1="1" x2="1" y2="0"><stop offset="0" stop-color="#ffffff"/><stop offset="1" stop-color="#88e888"/></linearGradient><linearGradient id="tg2" x1="0" y1="1" x2="1" y2="0"><stop offset="0" stop-color="#e4fae4"/><stop offset="1" stop-color="#a8eca8"/></linearGradient></defs><path d="M54,22.5 L73.5,4.5 Q74.5,3.5 76,3.5 H165 Q167.5,3.5 167.5,6 V22.5" fill="url(#tg2)" stroke="#505a50" stroke-width="1"/><path d="M6.5,22.5 L23,4.5 Q24,3.5 25.5,3.5 H62 Q64.5,3.5 64.5,6 V22.5" fill="url(#tg)" stroke="#505a50" stroke-width="1"/><path d="M158.5,22.5 L174.5,4.5 Q175.5,3.5 177,3.5 H219.5 Q222,3.5 222,6 V22.5 Z" fill="#238b23" stroke="#4a5a4a" stroke-width="1"/></svg>
<div style="left:259px;top:118px;font:11px/15px 'Liberation Sans',sans-serif;color:#686c78;letter-spacing:0px;">Trace</div>
<div style="left:314px;top:118px;font:11px/15px 'Liberation Sans',sans-serif;color:#686c78;letter-spacing:-0.25px;">Moray - Polling</div>
<div style="left:410px;top:119px;font:bold 12px/15px 'Liberation Sans',sans-serif;color:#fff;letter-spacing:0.2px;">Viewer</div>
<svg style="left:865px;top:123px;" width="10" height="6" viewBox="0 0 10 6"><polygon points="0.5,0.5 9,0.5 4.75,5.5" fill="#000"/></svg>
<svg style="left:881px;top:120px;" width="11" height="10" viewBox="0 0 11 10"><path d="M1,1 L10,9.5 M10,1 L1,9.5" stroke="#000" stroke-width="1.5"/></svg>
<div style="left:233px;top:136px;width:667px;height:326px;background:#f0f0f0;"></div>
<div style="left:233px;top:157px;width:665px;height:304px;box-sizing:border-box;border:1px solid #8c8c8c;border-left:none;background:#fff;"></div>
<div style="left:233px;top:137px;width:46px;height:21px;box-sizing:border-box;border:1px solid #8c8c8c;border-bottom:none;border-left:none;background:#fff;"></div>
<div style="left:278px;top:139px;width:61px;height:19px;box-sizing:border-box;border:1px solid #8c8c8c;border-bottom:1px solid #8c8c8c;background:linear-gradient(#f3f3f3,#e8e8e8 50%,#dadada);"></div>
<div style="left:241px;top:140px;font:12px/14px 'Liberation Sans',sans-serif;color:#000;transform:scaleX(0.875);transform-origin:0 0;">Status</div>
<div style="left:282px;top:142px;font:12px/14px 'Liberation Sans',sans-serif;color:#000;transform:scaleX(0.87);transform-origin:0 0;">Commands</div>
<div style="left:240px;top:162px;width:657px;height:24px;background:linear-gradient(90deg,#e6e6e6,#ececec 20%,#f2f2f2 45%,#f9f9f9 70%,#ffffff);"></div>
<div style="left:246px;top:166px;width:2px;height:15px;background:repeating-linear-gradient(180deg,#a0a0a0 0 2px,transparent 2px 4px);"></div>
<svg style="left:256px;top:167px;" width="14" height="14" viewBox="0 0 14 14"><defs><linearGradient id="rx" x1="0" y1="0" x2="0" y2="1"><stop offset="0" stop-color="#ff8a8a"/><stop offset="1" stop-color="#e84444"/></linearGradient></defs><path d="M2.2,2.2 L11.8,11.8 M11.8,2.2 L2.2,11.8" stroke="url(#rx)" stroke-width="3.2" stroke-linecap="round"/></svg>
<div style="left:275px;top:163px;width:23px;height:22px;box-sizing:border-box;border:1px solid #3390e8;background:linear-gradient(#f8fcff,#e6f2fc);"></div>
<svg style="left:277px;top:166px;" width="19" height="16" viewBox="0 0 19 16"><defs><linearGradient id="eg" x1="0" y1="0" x2="0" y2="1"><stop offset="0" stop-color="#5a9af0"/><stop offset="1" stop-color="#1a4fb8"/></linearGradient></defs><rect x="6.5" y="1.5" width="11" height="12" fill="#f2f6fc" stroke="#2d5aa8" stroke-width="1"/><rect x="7" y="2" width="10" height="2.2" fill="#3f78d0"/><path d="M11.5,4.2 V13 M7,7.2 H17 M7,10.2 H17" stroke="#88a4d0" stroke-width="0.9"/><polygon points="1.2,6.2 5.8,6.2 5.8,3.8 10.2,7.8 5.8,11.8 5.8,9.4 1.2,9.4" fill="url(#eg)" stroke="#1c3f8a" stroke-width="0.6"/></svg>
<div style="left:300px;top:164px;width:1px;height:20px;background:#bdbdbd;"></div>
<div style="left:240px;top:187px;width:653px;height:268px;box-sizing:border-box;border:1px solid #828790;background:#fff;"></div>
<div style="left:241px;top:188px;width:650px;height:23px;background:linear-gradient(#ffffff 0,#ffffff 42%,#f7f8f9 43%,#eef0f2);border-bottom:1px solid #d5d5d5;box-sizing:border-box;"></div>
<div style="left:391px;top:188px;width:1px;height:23px;background:#e3e4e6;"></div>
<div style="left:522px;top:188px;width:1px;height:23px;background:#e3e4e6;"></div>
<div style="left:622px;top:188px;width:1px;height:23px;background:#e3e4e6;"></div>
<div style="left:732px;top:188px;width:1px;height:23px;background:#e3e4e6;"></div>
<div style="left:247px;top:195px;font:12px/13px 'Liberation Sans',sans-serif;color:#000;white-space:nowrap;transform:scaleX(0.9);transform-origin:0 0;">name</div>
<div style="left:397px;top:195px;font:12px/13px 'Liberation Sans',sans-serif;color:#000;white-space:nowrap;transform:scaleX(0.9);transform-origin:0 0;">status</div>
<div style="left:528px;top:195px;font:12px/13px 'Liberation Sans',sans-serif;color:#000;white-space:nowrap;transform:scaleX(0.9);transform-origin:0 0;">t</div>
<div style="left:628px;top:195px;font:12px/13px 'Liberation Sans',sans-serif;color:#000;white-space:nowrap;transform:scaleX(0.9);transform-origin:0 0;">q</div>
<div style="left:738px;top:195px;font:12px/13px 'Liberation Sans',sans-serif;color:#000;white-space:nowrap;transform:scaleX(0.9);transform-origin:0 0;">telegram address</div>
<div style="left:241px;top:229px;width:650px;height:1px;background:#f0f0f0;"></div>
<div style="left:241px;top:246px;width:650px;height:1px;background:#f0f0f0;"></div>
<div style="left:241px;top:263px;width:650px;height:1px;background:#f0f0f0;"></div>
<div style="left:241px;top:280px;width:650px;height:1px;background:#f0f0f0;"></div>
<div style="left:241px;top:297px;width:650px;height:1px;background:#f0f0f0;"></div>
<div style="left:241px;top:314px;width:650px;height:1px;background:#f0f0f0;"></div>
<div style="left:241px;top:331px;width:650px;height:1px;background:#f0f0f0;"></div>
<div style="left:241px;top:348px;width:650px;height:1px;background:#f0f0f0;"></div>
<div style="left:241px;top:365px;width:650px;height:1px;background:#f0f0f0;"></div>
<div style="left:241px;top:382px;width:650px;height:1px;background:#f0f0f0;"></div>
<div style="left:241px;top:399px;width:650px;height:1px;background:#f0f0f0;"></div>
<div style="left:241px;top:416px;width:650px;height:1px;background:#f0f0f0;"></div>
<div style="left:241px;top:433px;width:650px;height:1px;background:#f0f0f0;"></div>
<div style="left:241px;top:450px;width:650px;height:1px;background:#f0f0f0;"></div>
<div style="left:391px;top:211px;width:1px;height:226px;background:#f0f0f0;"></div>
<div style="left:522px;top:211px;width:1px;height:226px;background:#f0f0f0;"></div>
<div style="left:622px;top:211px;width:1px;height:226px;background:#f0f0f0;"></div>
<div style="left:732px;top:211px;width:1px;height:226px;background:#f0f0f0;"></div>
<div style="left:247px;top:215px;font:12px/14px 'Liberation Sans',sans-serif;color:#000;white-space:nowrap;transform:scaleX(0.92);transform-origin:0 0;">Blackbur_Unknow1000</div>
<div style="left:397px;top:215px;font:12px/14px 'Liberation Sans',sans-serif;color:#000;white-space:nowrap;transform:scaleX(0.92);transform-origin:0 0;">True</div>
<div style="left:528px;top:215px;font:12px/14px 'Liberation Sans',sans-serif;color:#000;white-space:nowrap;transform:scaleX(0.92);transform-origin:0 0;">20/05/2014 05:...</div>
<div style="left:628px;top:215px;font:12px/14px 'Liberation Sans',sans-serif;color:#000;white-space:nowrap;transform:scaleX(0.92);transform-origin:0 0;">GOOD</div>
<div style="left:738px;top:215px;font:12px/14px 'Liberation Sans',sans-serif;color:#000;white-space:nowrap;transform:scaleX(0.92);transform-origin:0 0;">1000</div>
<div style="left:247px;top:232px;font:12px/14px 'Liberation Sans',sans-serif;color:#000;white-space:nowrap;transform:scaleX(0.92);transform-origin:0 0;">Blackbur_Unknow1001</div>
<div style="left:397px;top:232px;font:12px/14px 'Liberation Sans',sans-serif;color:#000;white-space:nowrap;transform:scaleX(0.92);transform-origin:0 0;">False</div>
<div style="left:528px;top:232px;font:12px/14px 'Liberation Sans',sans-serif;color:#000;white-space:nowrap;transform:scaleX(0.92);transform-origin:0 0;">20/05/2014 05:...</div>
<div style="left:628px;top:232px;font:12px/14px 'Liberation Sans',sans-serif;color:#000;white-space:nowrap;transform:scaleX(0.92);transform-origin:0 0;">GOOD</div>
<div style="left:738px;top:232px;font:12px/14px 'Liberation Sans',sans-serif;color:#000;white-space:nowrap;transform:scaleX(0.92);transform-origin:0 0;">1001</div>
<div style="left:247px;top:249px;font:12px/14px 'Liberation Sans',sans-serif;color:#000;white-space:nowrap;transform:scaleX(0.92);transform-origin:0 0;">Blackbur_Unknow1002</div>
<div style="left:397px;top:249px;font:12px/14px 'Liberation Sans',sans-serif;color:#000;white-space:nowrap;transform:scaleX(0.92);transform-origin:0 0;">True</div>
<div style="left:528px;top:249px;font:12px/14px 'Liberation Sans',sans-serif;color:#000;white-space:nowrap;transform:scaleX(0.92);transform-origin:0 0;">20/05/2014 05:...</div>
<div style="left:628px;top:249px;font:12px/14px 'Liberation Sans',sans-serif;color:#000;white-space:nowrap;transform:scaleX(0.92);transform-origin:0 0;">GOOD</div>
<div style="left:738px;top:249px;font:12px/14px 'Liberation Sans',sans-serif;color:#000;white-space:nowrap;transform:scaleX(0.92);transform-origin:0 0;">1002</div>
<div style="left:247px;top:266px;font:12px/14px 'Liberation Sans',sans-serif;color:#000;white-space:nowrap;transform:scaleX(0.92);transform-origin:0 0;">Blackbur_Unknow1003</div>
<div style="left:397px;top:266px;font:12px/14px 'Liberation Sans',sans-serif;color:#000;white-space:nowrap;transform:scaleX(0.92);transform-origin:0 0;">False</div>
<div style="left:528px;top:266px;font:12px/14px 'Liberation Sans',sans-serif;color:#000;white-space:nowrap;transform:scaleX(0.92);transform-origin:0 0;">20/05/2014 05:...</div>
<div style="left:628px;top:266px;font:12px/14px 'Liberation Sans',sans-serif;color:#000;white-space:nowrap;transform:scaleX(0.92);transform-origin:0 0;">GOOD</div>
<div style="left:738px;top:266px;font:12px/14px 'Liberation Sans',sans-serif;color:#000;white-space:nowrap;transform:scaleX(0.92);transform-origin:0 0;">1003</div>
<div style="left:247px;top:283px;font:12px/14px 'Liberation Sans',sans-serif;color:#000;white-space:nowrap;transform:scaleX(0.92);transform-origin:0 0;">Blackbur_Unknow1004</div>
<div style="left:397px;top:283px;font:12px/14px 'Liberation Sans',sans-serif;color:#000;white-space:nowrap;transform:scaleX(0.92);transform-origin:0 0;">True</div>
<div style="left:528px;top:283px;font:12px/14px 'Liberation Sans',sans-serif;color:#000;white-space:nowrap;transform:scaleX(0.92);transform-origin:0 0;">20/05/2014 05:...</div>
<div style="left:628px;top:283px;font:12px/14px 'Liberation Sans',sans-serif;color:#000;white-space:nowrap;transform:scaleX(0.92);transform-origin:0 0;">GOOD</div>
<div style="left:738px;top:283px;font:12px/14px 'Liberation Sans',sans-serif;color:#000;white-space:nowrap;transform:scaleX(0.92);transform-origin:0 0;">1004</div>
<div style="left:247px;top:300px;font:12px/14px 'Liberation Sans',sans-serif;color:#000;white-space:nowrap;transform:scaleX(0.92);transform-origin:0 0;">Blackbur_Unknow1005</div>
<div style="left:397px;top:300px;font:12px/14px 'Liberation Sans',sans-serif;color:#000;white-space:nowrap;transform:scaleX(0.92);transform-origin:0 0;">False</div>
<div style="left:528px;top:300px;font:12px/14px 'Liberation Sans',sans-serif;color:#000;white-space:nowrap;transform:scaleX(0.92);transform-origin:0 0;">20/05/2014 05:...</div>
<div style="left:628px;top:300px;font:12px/14px 'Liberation Sans',sans-serif;color:#000;white-space:nowrap;transform:scaleX(0.92);transform-origin:0 0;">GOOD</div>
<div style="left:738px;top:300px;font:12px/14px 'Liberation Sans',sans-serif;color:#000;white-space:nowrap;transform:scaleX(0.92);transform-origin:0 0;">1005</div>
<div style="left:247px;top:317px;font:12px/14px 'Liberation Sans',sans-serif;color:#000;white-space:nowrap;transform:scaleX(0.92);transform-origin:0 0;">Blackbur_Unknow1006</div>
<div style="left:397px;top:317px;font:12px/14px 'Liberation Sans',sans-serif;color:#000;white-space:nowrap;transform:scaleX(0.92);transform-origin:0 0;">True</div>
<div style="left:528px;top:317px;font:12px/14px 'Liberation Sans',sans-serif;color:#000;white-space:nowrap;transform:scaleX(0.92);transform-origin:0 0;">20/05/2014 05:...</div>
<div style="left:628px;top:317px;font:12px/14px 'Liberation Sans',sans-serif;color:#000;white-space:nowrap;transform:scaleX(0.92);transform-origin:0 0;">GOOD</div>
<div style="left:738px;top:317px;font:12px/14px 'Liberation Sans',sans-serif;color:#000;white-space:nowrap;transform:scaleX(0.92);transform-origin:0 0;">1006</div>
<div style="left:247px;top:334px;font:12px/14px 'Liberation Sans',sans-serif;color:#000;white-space:nowrap;transform:scaleX(0.92);transform-origin:0 0;">Blackbur_Unknow1007</div>
<div style="left:397px;top:334px;font:12px/14px 'Liberation Sans',sans-serif;color:#000;white-space:nowrap;transform:scaleX(0.92);transform-origin:0 0;">False</div>
<div style="left:528px;top:334px;font:12px/14px 'Liberation Sans',sans-serif;color:#000;white-space:nowrap;transform:scaleX(0.92);transform-origin:0 0;">20/05/2014 05:...</div>
<div style="left:628px;top:334px;font:12px/14px 'Liberation Sans',sans-serif;color:#000;white-space:nowrap;transform:scaleX(0.92);transform-origin:0 0;">GOOD</div>
<div style="left:738px;top:334px;font:12px/14px 'Liberation Sans',sans-serif;color:#000;white-space:nowrap;transform:scaleX(0.92);transform-origin:0 0;">1007</div>
<div style="left:247px;top:351px;font:12px/14px 'Liberation Sans',sans-serif;color:#000;white-space:nowrap;transform:scaleX(0.92);transform-origin:0 0;">Blackbur_Unknow1008</div>
<div style="left:397px;top:351px;font:12px/14px 'Liberation Sans',sans-serif;color:#000;white-space:nowrap;transform:scaleX(0.92);transform-origin:0 0;">True</div>
<div style="left:528px;top:351px;font:12px/14px 'Liberation Sans',sans-serif;color:#000;white-space:nowrap;transform:scaleX(0.92);transform-origin:0 0;">20/05/2014 05:...</div>
<div style="left:628px;top:351px;font:12px/14px 'Liberation Sans',sans-serif;color:#000;white-space:nowrap;transform:scaleX(0.92);transform-origin:0 0;">GOOD</div>
<div style="left:738px;top:351px;font:12px/14px 'Liberation Sans',sans-serif;color:#000;white-space:nowrap;transform:scaleX(0.92);transform-origin:0 0;">1008</div>
<div style="left:247px;top:368px;font:12px/14px 'Liberation Sans',sans-serif;color:#000;white-space:nowrap;transform:scaleX(0.92);transform-origin:0 0;">Blackbur_Unknow1009</div>
<div style="left:397px;top:368px;font:12px/14px 'Liberation Sans',sans-serif;color:#000;white-space:nowrap;transform:scaleX(0.92);transform-origin:0 0;">False</div>
<div style="left:528px;top:368px;font:12px/14px 'Liberation Sans',sans-serif;color:#000;white-space:nowrap;transform:scaleX(0.92);transform-origin:0 0;">20/05/2014 05:...</div>
<div style="left:628px;top:368px;font:12px/14px 'Liberation Sans',sans-serif;color:#000;white-space:nowrap;transform:scaleX(0.92);transform-origin:0 0;">GOOD</div>
<div style="left:738px;top:368px;font:12px/14px 'Liberation Sans',sans-serif;color:#000;white-space:nowrap;transform:scaleX(0.92);transform-origin:0 0;">1009</div>
<div style="left:247px;top:385px;font:12px/14px 'Liberation Sans',sans-serif;color:#000;white-space:nowrap;transform:scaleX(0.92);transform-origin:0 0;">Blackbur_Unknow1010</div>
<div style="left:397px;top:385px;font:12px/14px 'Liberation Sans',sans-serif;color:#000;white-space:nowrap;transform:scaleX(0.92);transform-origin:0 0;">True</div>
<div style="left:528px;top:385px;font:12px/14px 'Liberation Sans',sans-serif;color:#000;white-space:nowrap;transform:scaleX(0.92);transform-origin:0 0;">20/05/2014 05:...</div>
<div style="left:628px;top:385px;font:12px/14px 'Liberation Sans',sans-serif;color:#000;white-space:nowrap;transform:scaleX(0.92);transform-origin:0 0;">GOOD</div>
<div style="left:738px;top:385px;font:12px/14px 'Liberation Sans',sans-serif;color:#000;white-space:nowrap;transform:scaleX(0.92);transform-origin:0 0;">1010</div>
<div style="left:241px;top:436px;width:651px;height:17px;background:linear-gradient(#e6e6e6,#f0f0f0 20%,#f4f4f4 80%,#e8e8e8);"></div>
<svg style="left:247px;top:440px;" width="5" height="8" viewBox="0 0 5 8"><polygon points="4.5,0 0.5,4 4.5,8" fill="#3c3c3c"/></svg>
<svg style="left:881px;top:440px;" width="5" height="8" viewBox="0 0 5 8"><polygon points="0.5,0 4.5,4 0.5,8" fill="#3c3c3c"/></svg>
<div style="left:260px;top:437px;width:507px;height:15px;box-sizing:border-box;border:1px solid #9c9c9c;border-radius:2px;background:linear-gradient(#f6f6f6,#ebebeb 45%,#d4d4d4 52%,#c6c6c6);"></div>
<svg style="left:509px;top:440px;" width="8" height="9" viewBox="0 0 8 9"><defs><linearGradient id="gh" x1="0" y1="0" x2="0" y2="1"><stop offset="0" stop-color="#333"/><stop offset="1" stop-color="#888"/></linearGradient></defs><path d="M1,0 V8 M4,0 V8 M7,0 V8" stroke="url(#gh)" stroke-width="1.6"/></svg>
<div style="left:9px;top:467px;width:892px;height:18px;background:#238b23;"></div>
<div style="left:14px;top:471px;font:11px/12px 'Liberation Sans',sans-serif;color:#fff;">Log</div>
<svg style="left:869px;top:471px;" width="10" height="12" viewBox="0 0 10 12"><rect x="2" y="1" width="1" height="6" fill="#fff"/><rect x="2" y="1" width="5" height="1" fill="#fff"/><rect x="5" y="1" width="2" height="6" fill="#fff"/><rect x="1" y="7" width="7" height="1" fill="#fff"/><rect x="4" y="8" width="1" height="3" fill="#fff"/></svg>
<svg style="left:886px;top:472px;" width="11" height="10" viewBox="0 0 11 10"><path d="M0.8,1.2 L9.4,9 M9.4,1.2 L0.8,9" stroke="#fff" stroke-width="1.6"/></svg>
<div style="left:9px;top:485px;width:892px;height:26px;background:linear-gradient(90deg,#f2f2f2,#f0f0f0 30%,#f4f4f4 70%,#f8f8f8);"></div>
<div style="left:9px;top:485px;width:67px;height:25px;background:linear-gradient(#fcfcfc,#f6f6f6 60%,#eeeeee);"></div>
<div style="left:75px;top:487px;width:1px;height:21px;background:#cfcfcf;"></div>
<div style="left:15px;top:489px;width:2px;height:15px;background:repeating-linear-gradient(180deg,#a0a0a0 0 2px,transparent 2px 4px);"></div>
<svg style="left:25px;top:489px;" width="14" height="14" viewBox="0 0 14 14"><path d="M2.2,2.2 L11.8,11.8 M11.8,2.2 L2.2,11.8" stroke="url(#rx)" stroke-width="3.2" stroke-linecap="round"/></svg>
<div style="left:47px;top:490px;width:1px;height:14px;background:#b8b8b8;"></div>
<svg style="left:52px;top:487px;" width="18" height="19" viewBox="0 0 18 19"><defs><linearGradient id="xdg" x1="0" y1="0" x2="1" y2="1"><stop offset="0" stop-color="#f4f9ff"/><stop offset="1" stop-color="#bcd6f4"/></linearGradient></defs><path d="M2.5,1.5 H11.5 L15.5,5.5 V16 Q15.5,17 14.5,17 H3.5 Q2.5,17 2.5,16 Z" fill="url(#xdg)" stroke="#3f74c8" stroke-width="1"/><path d="M1.5,5 L10.5,12 M10,5 L2,12" stroke="#2f7f2f" stroke-width="2.8"/><path d="M2.5,5.2 L9.8,11 M9.2,5.2 L3,11" stroke="#8fd08f" stroke-width="0.7"/></svg>
<div style="left:9px;top:511px;width:892px;height:68px;box-sizing:border-box;border:1px solid #6a6a6a;border-right-color:#a8a8a8;border-bottom-color:#d0d0d0;background:#fff;"></div>
<div style="left:12px;top:514px;font:12px/13px 'Liberation Sans',sans-serif;color:#1c8a1c;white-space:nowrap;letter-spacing:0px;transform:scaleX(0.91);transform-origin:0 0;">C:\Users\Axon\Documents\AxonTestProjects\Project-3\communication.aer Loaded</div>
<div style="left:12px;top:527px;font:12px/13px 'Liberation Sans',sans-serif;color:#4a5ae8;white-space:nowrap;letter-spacing:-0.35px;transform:scaleX(0.91);transform-origin:0 0;">Open Communication</div>
<div style="left:12px;top:540px;font:12px/13px 'Liberation Sans',sans-serif;color:#1c8a1c;white-space:nowrap;letter-spacing:0px;transform:scaleX(0.91);transform-origin:0 0;">C:\Users\Axon\Documents\AxonTestProjects\Project-3\iec61850.aer Loaded</div>
<div style="left:12px;top:553px;font:12px/13px 'Liberation Sans',sans-serif;color:#1c8a1c;white-space:nowrap;letter-spacing:0px;transform:scaleX(0.91);transform-origin:0 0;">C:\Users\Axon\Documents\AxonTestProjects\Project-3\modbus.aer Loaded</div>
<div style="left:12px;top:566px;font:12px/13px 'Liberation Sans',sans-serif;color:#1c8a1c;white-space:nowrap;letter-spacing:0px;transform:scaleX(0.91);transform-origin:0 0;">C:\Users\Axon\Documents\AxonTestProjects\Project-3\PLCSoft.aer Loaded</div>
<div style="left:883px;top:512px;width:17px;height:65px;background:linear-gradient(90deg,#e6e6e6,#f0f0f0 20%,#f4f4f4 80%,#e8e8e8);"></div>
<svg style="left:887px;top:519px;" width="8" height="5" viewBox="0 0 8 5"><polygon points="0,4.5 4,0.5 8,4.5" fill="#3c3c3c"/></svg>
<svg style="left:887px;top:566px;" width="8" height="5" viewBox="0 0 8 5"><polygon points="0,0.5 4,4.5 8,0.5" fill="#3c3c3c"/></svg>
<div style="left:884px;top:530px;width:15px;height:15px;box-sizing:border-box;border:1px solid #9c9c9c;border-radius:2px;background:linear-gradient(90deg,#f6f6f6,#ebebeb 45%,#d4d4d4 52%,#c6c6c6);"></div>
<div style="left:8px;top:462px;width:1px;height:118px;background:#6a6470;"></div>
<div style="left:901px;top:111px;width:2px;height:469px;background:linear-gradient(90deg,#626262,#4f5c6c);"></div>
<div style="left:903px;top:111px;width:1px;height:469px;background:#d6eaff;"></div>
<div style="left:8px;top:580px;width:895px;height:22px;background:#238b23;"></div>
<div style="left:12px;top:585px;font:12px/14px 'Liberation Sans',sans-serif;color:#fff;letter-spacing:-0.1px;">Ready</div>
<svg style="left:888px;top:588px;" width="14" height="14" viewBox="0 0 14 14"><rect x="11" y="2" width="2" height="2" fill="#fff"/><rect x="10" y="1" width="1.4" height="1.4" fill="#b8a8c0"/><rect x="7" y="6" width="2" height="2" fill="#fff"/><rect x="6" y="5" width="1.4" height="1.4" fill="#b8a8c0"/><rect x="11" y="6" width="2" height="2" fill="#fff"/><rect x="10" y="5" width="1.4" height="1.4" fill="#b8a8c0"/><rect x="3" y="10" width="2" height="2" fill="#fff"/><rect x="2" y="9" width="1.4" height="1.4" fill="#b8a8c0"/><rect x="7" y="10" width="2" height="2" fill="#fff"/><rect x="6" y="9" width="1.4" height="1.4" fill="#b8a8c0"/><rect x="11" y="10" width="2" height="2" fill="#fff"/><rect x="10" y="9" width="1.4" height="1.4" fill="#b8a8c0"/></svg>
</body></html>
